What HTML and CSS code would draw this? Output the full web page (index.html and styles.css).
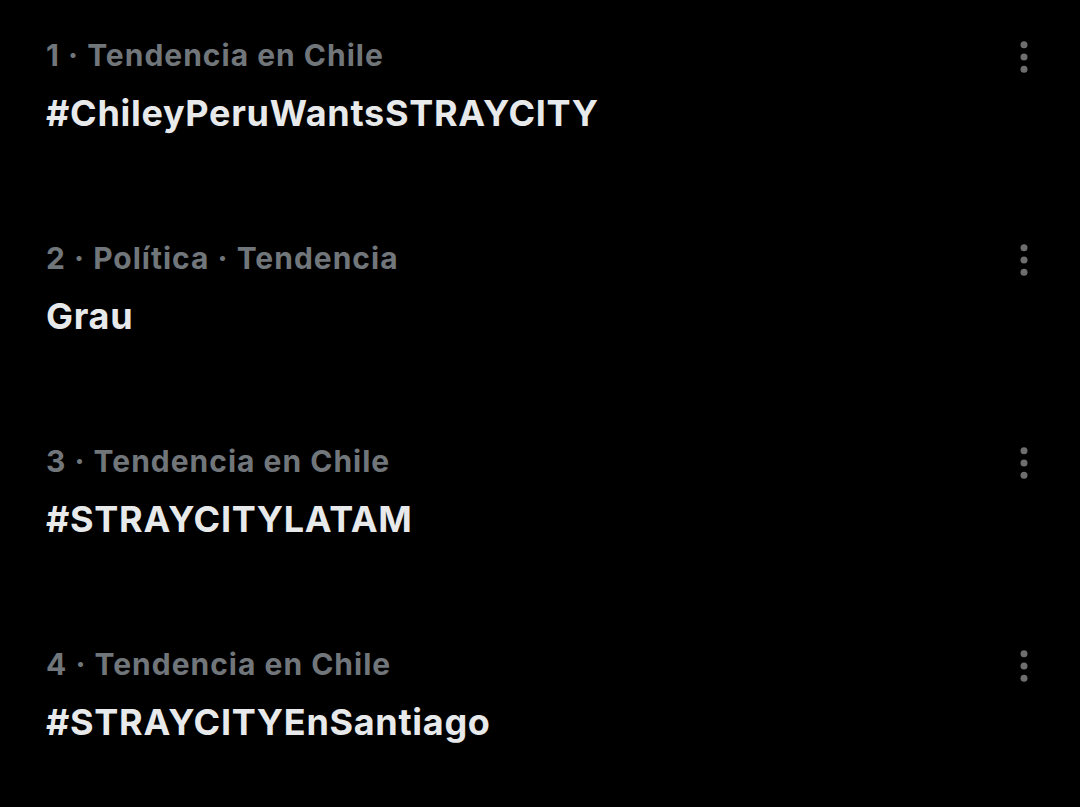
FILE: index.html
```html
<!DOCTYPE html>
<html lang="es">
<head>
  <meta charset="UTF-8">
  <meta name="viewport" content="width=device-width, initial-scale=1.0">
  <title>Tendencias</title>
  <link rel="stylesheet" href="styles.css">
</head>
<body>

  <div class="trends">
    <!-- Cada tendencia: contexto arriba, nombre abajo, menú a la derecha -->
    <div class="trend">
      <div class="trend-text">
        <div class="trend-meta">1 · Tendencia en Chile</div>
        <div class="trend-name">#ChileyPeruWantsSTRAYCITY</div>
      </div>
      <button class="more" aria-label="Más opciones">
        <svg viewBox="0 0 24 24"><circle cx="12" cy="5" r="2"/><circle cx="12" cy="12" r="2"/><circle cx="12" cy="19" r="2"/></svg>
      </button>
    </div>

    <div class="trend">
      <div class="trend-text">
        <div class="trend-meta">2 · Política · Tendencia</div>
        <div class="trend-name">Grau</div>
      </div>
      <button class="more" aria-label="Más opciones">
        <svg viewBox="0 0 24 24"><circle cx="12" cy="5" r="2"/><circle cx="12" cy="12" r="2"/><circle cx="12" cy="19" r="2"/></svg>
      </button>
    </div>

    <div class="trend">
      <div class="trend-text">
        <div class="trend-meta">3 · Tendencia en Chile</div>
        <div class="trend-name">#STRAYCITYLATAM</div>
      </div>
      <button class="more" aria-label="Más opciones">
        <svg viewBox="0 0 24 24"><circle cx="12" cy="5" r="2"/><circle cx="12" cy="12" r="2"/><circle cx="12" cy="19" r="2"/></svg>
      </button>
    </div>

    <div class="trend">
      <div class="trend-text">
        <div class="trend-meta">4 · Tendencia en Chile</div>
        <div class="trend-name">#STRAYCITYEnSantiago</div>
      </div>
      <button class="more" aria-label="Más opciones">
        <svg viewBox="0 0 24 24"><circle cx="12" cy="5" r="2"/><circle cx="12" cy="12" r="2"/><circle cx="12" cy="19" r="2"/></svg>
      </button>
    </div>
  </div>

</body>
</html>
```

FILE: styles.css
```css
body {
  margin: 0;
  padding: 0;
  background-color: #000;
  font-family: 'Inter', 'Roboto', sans-serif;
  height: 100vh;
  overflow: hidden;
}

.trends {
  padding-top: 36px;
}

.trend {
  display: flex;
  justify-content: space-between;
  align-items: flex-start;
  height: 203px;
  padding: 0 35px 0 46px;
}

.trend:last-child {
  height: auto;
}

.trend-meta {
  color: #71767b;
  font-size: 30px;
  font-weight: 700;
  line-height: 38px;
  letter-spacing: 1px;
}

.trend-name {
  color: #e7e9ea;
  font-size: 36px;
  font-weight: 700;
  line-height: 44px;
  letter-spacing: 0.7px;
  margin-top: 17px;
}

.more {
  background: none;
  border: none;
  padding: 0;
  margin-top: 0;
  width: 42px;
  height: 42px;
  cursor: pointer;
}

.more svg {
  width: 42px;
  height: 42px;
  fill: #6e6e6e;
}
```
